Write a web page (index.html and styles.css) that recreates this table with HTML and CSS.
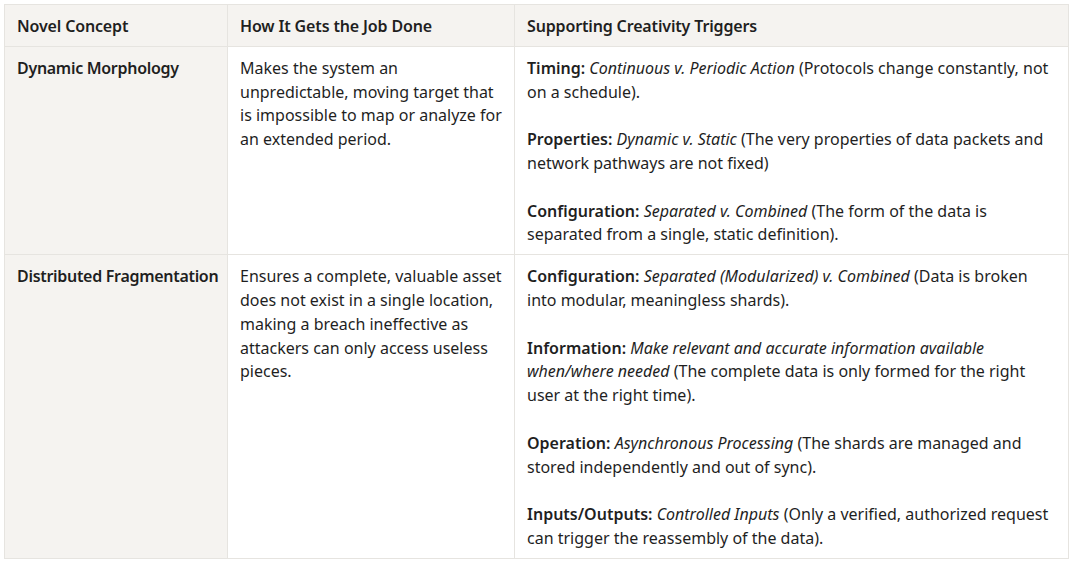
FILE: index.html
```html
<!DOCTYPE html>
<html>
<head>
<meta charset="utf-8">
<link rel="stylesheet" href="styles.css">
</head>
<body>
<table class="grid">
  <colgroup>
    <col class="c1"><col class="c2"><col class="c3">
  </colgroup>
  <thead>
    <tr>
      <th>Novel Concept</th>
      <th>How It Gets the Job Done</th>
      <th>Supporting Creativity Triggers</th>
    </tr>
  </thead>
  <tbody>
    <tr>
      <td class="concept">Dynamic Morphology</td>
      <td>Makes the system an unpredictable, moving target that is impossible to map or analyze for an extended period.</td>
      <td>
        <p><b>Timing:</b> <i>Continuous v. Periodic Action</i> (Protocols change constantly, not on a schedule).</p>
        <p><b>Properties:</b> <i>Dynamic v. Static</i> (The very properties of data packets and network pathways are not fixed)</p>
        <p><b>Configuration:</b> <i>Separated v. Combined</i> (The form of the data is separated from a single, static definition).</p>
      </td>
    </tr>
    <tr>
      <td class="concept">Distributed Fragmentation</td>
      <td>Ensures a complete, valuable asset does not exist in a single location, making a breach ineffective as attackers can only access useless pieces.</td>
      <td>
        <p><b>Configuration:</b> <i>Separated (Modularized) v. Combined</i> (Data is broken into modular, meaningless shards).</p>
        <p><b>Information:</b> <i>Make relevant and accurate information available when/where needed</i> (The complete data is only formed for the right user at the right time).</p>
        <p><b>Operation:</b> <i>Asynchronous Processing</i> (The shards are managed and stored independently and out of sync).</p>
        <p><b>Inputs/Outputs:</b> <i>Controlled Inputs</i> (Only a verified, authorized request can trigger the reassembly of the data).</p>
      </td>
    </tr>
  </tbody>
</table>
</body>
</html>
```
FILE: styles.css
```css
html, body {
  margin: 0;
  padding: 0;
  background: #ffffff;
}
body {
  font-family: "Noto Sans", "Open Sans", sans-serif;
  font-size: 16px;
  line-height: 23.8px;
  color: #1f1f1f;
}
.grid {
  margin: 4px 0 0 4px;
  width: 1064px;
  border-collapse: collapse;
  table-layout: fixed;
}
.c1 { width: 223px; }
.c2 { width: 287px; }
.c3 { width: 554px; }
.grid th, .grid td {
  border: 1px solid #e6e4e0;
  padding: 10px 12px 7px 12px;
  text-align: left;
  vertical-align: top;
}
.grid th {
  background: #f5f3f0;
  font-weight: 600;
  letter-spacing: -0.15px;
}
.grid td.concept {
  background: #f5f3f0;
  font-weight: 600;
  letter-spacing: -0.3px;
  white-space: nowrap;
}
.grid p {
  margin: 0 0 23.8px 0;
}
.grid p:last-child {
  margin-bottom: 0;
}
.grid b { font-weight: 600; }
```
